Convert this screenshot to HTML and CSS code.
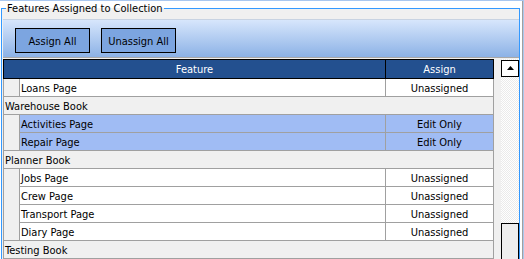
FILE: index.html
```html
<!DOCTYPE html>
<html>
<head>
<meta charset="utf-8">
<link rel="stylesheet" href="styles.css">
</head>
<body>
<fieldset class="group">
  <legend class="legend">Features Assigned to Collection</legend>
  <div class="toolbar">
    <button class="btn">Assign All</button>
    <button class="btn">Unassign All</button>
  </div>
  <div class="gridarea">
    <div class="grid">
      <div class="hdr"><div class="hf">Feature</div><div class="ha">Assign</div></div>
      <div class="row child last"><div class="ind"></div><div class="cf">Loans Page</div><div class="ca">Unassigned</div></div>
      <div class="row grp">Warehouse Book</div>
      <div class="row child sel"><div class="ind"></div><div class="cf">Activities Page</div><div class="ca">Edit Only</div></div>
      <div class="row child sel last"><div class="ind"></div><div class="cf">Repair Page</div><div class="ca">Edit Only</div></div>
      <div class="row grp">Planner Book</div>
      <div class="row child"><div class="ind"></div><div class="cf">Jobs Page</div><div class="ca">Unassigned</div></div>
      <div class="row child"><div class="ind"></div><div class="cf">Crew Page</div><div class="ca">Unassigned</div></div>
      <div class="row child"><div class="ind"></div><div class="cf">Transport Page</div><div class="ca">Unassigned</div></div>
      <div class="row child last"><div class="ind"></div><div class="cf">Diary Page</div><div class="ca">Unassigned</div></div>
      <div class="row grp">Testing Book</div>
    </div>
    <div class="vscroll">
      <div class="up"><svg width="7" height="4" viewBox="0 0 7 4"><polygon points="3.5,0 7,4 0,4" fill="#000"/></svg></div>
      <div class="thumb"></div>
    </div>
  </div>
</fieldset>
<div class="edge"></div>
</body>
</html>
```

FILE: styles.css
```css
* { box-sizing: border-box; }
html, body { margin: 0; padding: 0; }
body {
  width: 524px;
  height: 259px;
  overflow: hidden;
  background: #fff;
  border-top: 1px solid #a9c7ef;
  display: flex;
  align-items: flex-start;
  font-family: "DejaVu Sans Condensed", "DejaVu Sans", sans-serif;
  font-stretch: condensed;
  font-size: 11px;
  color: #000;
}
.group {
  margin: 0 0 0 1px;
  width: 519px;
  height: 300px;
  flex: 0 0 519px;
  border: 1px solid #3399ff;
  border-bottom: none;
  padding: 3px 0 0 1px;
  background: #f0f0f0;
  min-width: 0;
}
.legend {
  margin-left: 3px;
  padding: 0 1px;
  line-height: 16px;
  height: 15px;
}
.toolbar {
  height: 39px;
  display: flex;
  gap: 11px;
  padding: 8px 0 0 12px;
  border-top: 1px solid #c8d3e2;
  border-bottom: 1px solid #a8a8a8;
  background: linear-gradient(to bottom, #d7e6fc, #8cb2e6);
  margin-bottom: 1px;
}
.btn {
  width: 75px;
  height: 25px;
  border: 1px solid #000;
  background: #7ca5e0;
  font: inherit;
  color: #000;
  padding: 1px 0 0;
  margin: 0;
}
.gridarea {
  display: flex;
  align-items: flex-start;
}
.grid {
  width: 491px;
  flex: 0 0 491px;
}
.hdr {
  display: flex;
  height: 20px;
  border: 1px solid #000;
  background: #23508f;
  color: #fff;
  line-height: 18px;
  text-align: center;
}
.hf { flex: 0 0 382px; border-right: 1px solid #000; padding-top: 1px; }
.ha { flex: 1; padding-top: 1px; }
.row {
  display: flex;
  height: 18px;
  border-left: 1px solid #a0a0a0;
  border-right: 1px solid #a0a0a0;
  line-height: 16px;
  overflow: hidden;
}
.grp {
  background: #f0f0f0;
  border-bottom: 1px solid #a0a0a0;
  padding: 2px 0 0 1px;
}
.ind { flex: 0 0 15px; background: #f0f0f0; }
.last .ind { border-bottom: 1px solid #a0a0a0; }
.cf {
  flex: 0 0 367px;
  border-left: 1px solid #a0a0a0;
  border-right: 1px solid #a0a0a0;
  border-bottom: 1px solid #a0a0a0;
  background: #fff;
  padding: 2px 0 0 1px;
}
.ca {
  flex: 1;
  border-bottom: 1px solid #a0a0a0;
  background: #fff;
  text-align: center;
  padding-top: 2px;
}
.sel .cf, .sel .ca { background: #a0bcf4; }
.vscroll {
  margin-left: 7px;
  width: 18px;
  height: 220px;
  padding-top: 1px;
  display: flex;
  flex-direction: column;
  background: repeating-conic-gradient(#ffffff 0 25%, #ebebeb 0 50%) 0 0 / 2px 2px;
}
.up {
  height: 18px;
  border: 1px solid #000;
  background: #fff;
  display: flex;
  align-items: center;
  justify-content: center;
  padding-bottom: 1px;
}
.up svg { display: block; }
.thumb {
  margin-top: 146px;
  height: 60px;
  border: 1px solid #000;
  background: #eeeeee;
}
.edge {
  flex: 0 0 4px;
  height: 259px;
  background: linear-gradient(to right, #fff 0 2px, #a0a0a0 2px 3px, #aac8ee 3px 4px);
}
```
